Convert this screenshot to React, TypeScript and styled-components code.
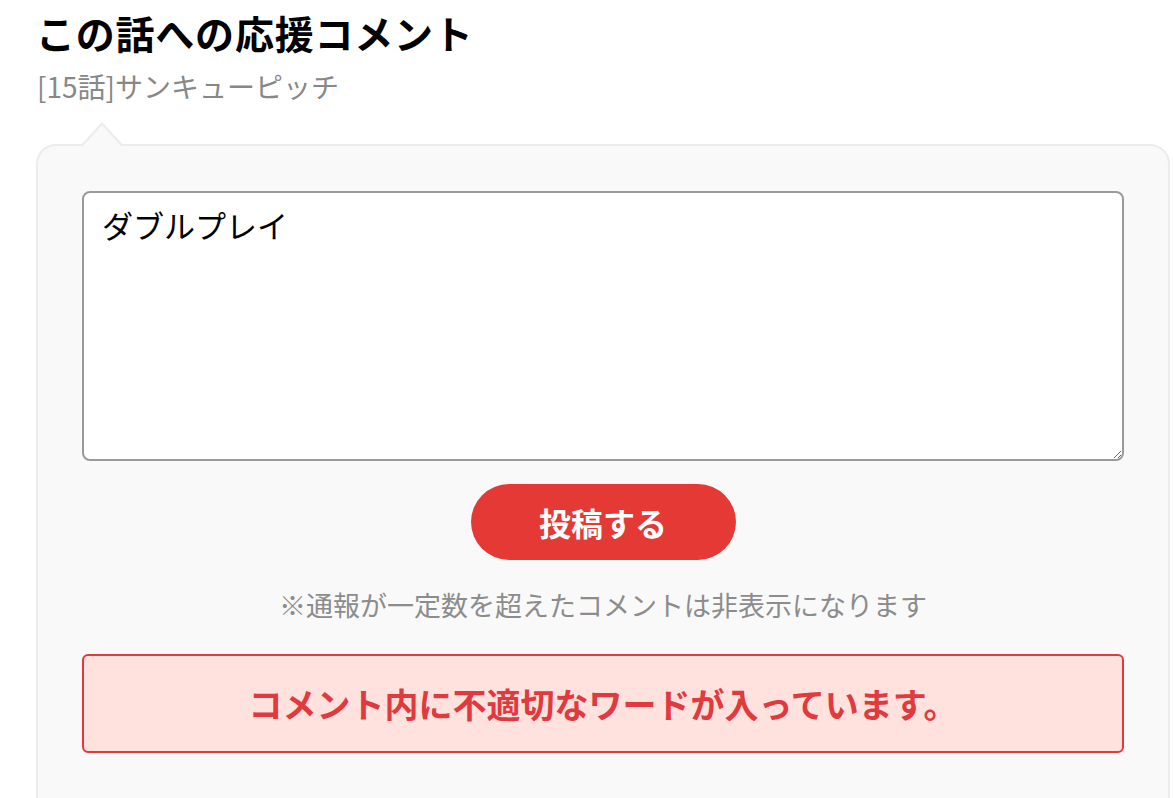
import { useState } from "react";
import styled, { createGlobalStyle } from "styled-components";

const GlobalStyle = createGlobalStyle`
    html, body {
        margin: 0;
        padding: 0;
        background: #fff;
        font-family: "Noto Sans CJK JP", "Noto Sans", sans-serif;
    }
`;

const Page = styled.div`
    padding: 8px 3px 0 36px;
    overflow: hidden;
    height: 798px;
    box-sizing: border-box;
`;

const Title = styled.h1`
    margin: 0;
    font-size: 39px;
    line-height: 49px;
    font-weight: 700;
    color: #000;
    letter-spacing: 0.02em;
`;

const EpisodeName = styled.p`
    margin: 11px 0 0 1px;
    font-size: 28px;
    line-height: 36px;
    color: #888;
`;

const Bubble = styled.section`
    position: relative;
    margin-top: 40px;
    padding: 45px 44px 80px;
    background: #f9f9f9;
    border: 2px solid #ececec;
    border-radius: 20px;
    display: flex;
    flex-direction: column;
    align-items: center;

    &::before,
    &::after {
        content: "";
        position: absolute;
        left: 42px;
        width: 0;
        height: 0;
        border-left: 22px solid transparent;
        border-right: 22px solid transparent;
    }

    &::before {
        top: -24px;
        border-bottom: 24px solid #ececec;
    }

    &::after {
        top: -21px;
        left: 44px;
        border-left-width: 20px;
        border-right-width: 20px;
        border-bottom: 22px solid #f9f9f9;
    }
`;

const CommentInput = styled.textarea`
    width: 100%;
    height: 270px;
    box-sizing: border-box;
    padding: 10px 18px;
    border: 2px solid #9a9a9a;
    border-radius: 8px;
    background: #fff;
    font-family: inherit;
    font-size: 31px;
    line-height: 44px;
    color: #000;
    outline: none;
`;

const SubmitButton = styled.button`
    margin-top: 23px;
    width: 265px;
    height: 76px;
    border: none;
    border-radius: 38px;
    background: #e53935;
    color: #fff;
    font-family: inherit;
    font-size: 32px;
    font-weight: 700;
    cursor: pointer;
`;

const Note = styled.p`
    margin: 27px 0 0;
    font-size: 27px;
    line-height: 36px;
    color: #8c8c8c;
    text-align: center;
`;

const ErrorBox = styled.div`
    margin-top: 31px;
    width: 100%;
    height: 99px;
    box-sizing: border-box;
    display: flex;
    align-items: center;
    justify-content: center;
    background: #ffe1de;
    border: 2px solid #e0393e;
    border-radius: 6px;
    color: #e0393e;
    font-size: 34px;
    font-weight: 700;
`;

function App() {
    const [comment, setComment] = useState("ダブルプレイ");

    return (
        <>
            <GlobalStyle />
            <Page>
                <Title>この話への応援コメント</Title>
                <EpisodeName>[15話]サンキューピッチ</EpisodeName>
                <Bubble>
                    <CommentInput value={comment} onChange={(e) => setComment(e.target.value)} />
                    <SubmitButton>投稿する</SubmitButton>
                    <Note>※通報が一定数を超えたコメントは非表示になります</Note>
                    <ErrorBox>コメント内に不適切なワードが入っています。</ErrorBox>
                </Bubble>
            </Page>
        </>
    );
}

export default App;
